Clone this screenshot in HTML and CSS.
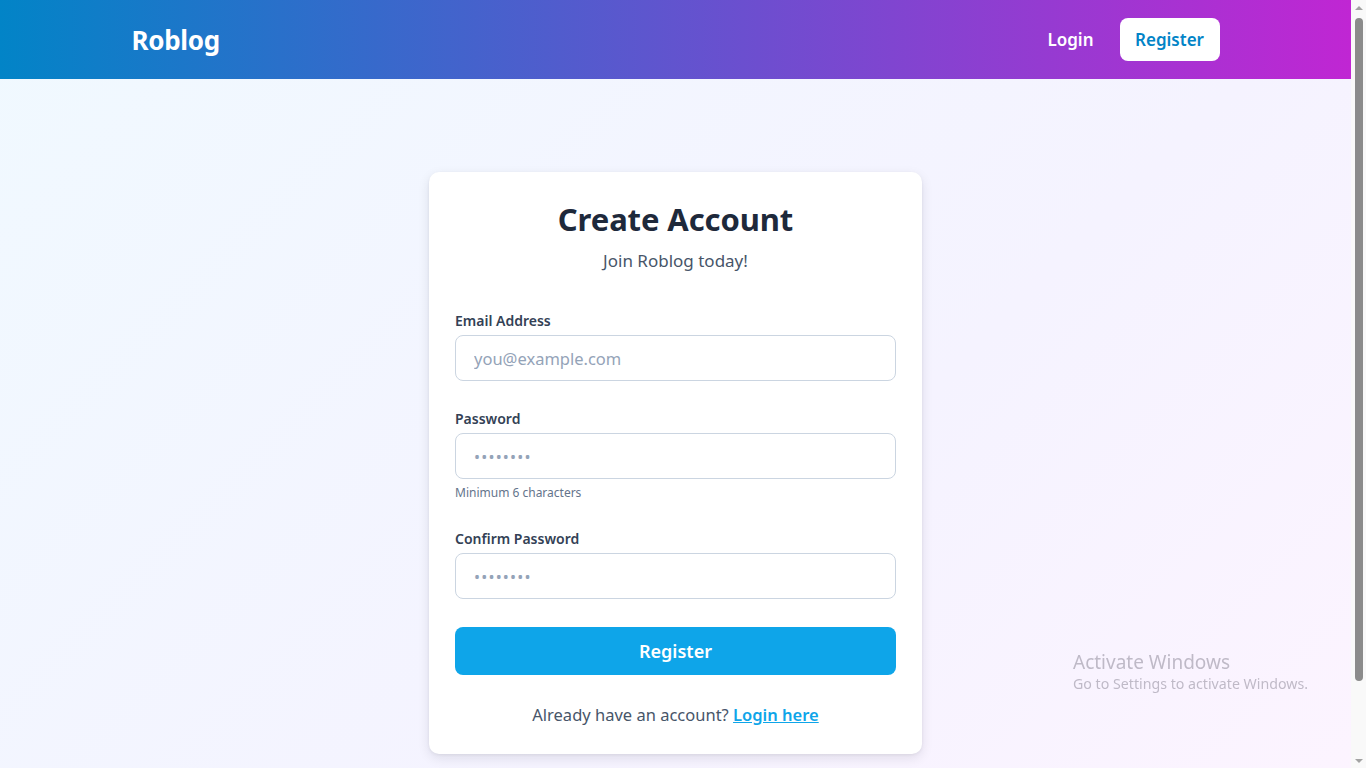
FILE: index.html
```html
<!DOCTYPE html>
<html lang="en">
<head>
<meta charset="utf-8">
<title>Register - Roblog</title>
<link rel="stylesheet" href="styles.css">
</head>
<body>
<div class="page">
  <header class="navbar">
    <div class="nav-inner">
      <a class="logo" href="#">Roblog</a>
      <nav class="nav-links">
        <a class="nav-login" href="#">Login</a>
        <a class="nav-register" href="#">Register</a>
      </nav>
    </div>
  </header>
  <main class="main">
    <section class="card">
      <h1 class="title">Create Account</h1>
      <p class="subtitle">Join Roblog today!</p>
      <form class="form">
        <div class="field">
          <label class="label" for="email">Email Address</label>
          <input class="input" id="email" type="email" placeholder="you@example.com">
        </div>
        <div class="field field-pass">
          <label class="label" for="password">Password</label>
          <input class="input input-pass" id="password" type="password" placeholder="••••••••">
          <p class="hint">Minimum 6 characters</p>
        </div>
        <div class="field">
          <label class="label" for="confirm">Confirm Password</label>
          <input class="input input-pass" id="confirm" type="password" placeholder="••••••••">
        </div>
        <button class="submit" type="button">Register</button>
      </form>
      <p class="switch">Already have an account? <a class="switch-link" href="#">Login here</a></p>
    </section>
  </main>
</div>
<div class="scrollbar" aria-hidden="true">
  <span class="sb-arrow sb-up"></span>
  <span class="sb-track"><span class="sb-thumb"></span></span>
  <span class="sb-arrow sb-down"></span>
</div>
<div class="watermark">
  <div class="wm-title">Activate Windows</div>
  <div class="wm-sub">Go to Settings to activate Windows.</div>
</div>
</body>
</html>
```
FILE: styles.css
```css
* { box-sizing: border-box; }
html, body { margin: 0; padding: 0; }
html { overflow: hidden; }
body {
  font-family: "Noto Sans", "Open Sans", sans-serif;
  color: #1e293b;
  background: #f9f9f9;
}
a { text-decoration: none; }

.page {
  margin-right: 15px;
  min-height: 852px;
  background: linear-gradient(135deg, #f0f9ff 0%, #f5f3ff 60%, #fdf4ff 100%);
}

.navbar {
  height: 79px;
  background: linear-gradient(90deg, #0284c7 0%, #6b4fcf 55%, #c026d3 100%);
}
.nav-inner {
  max-width: 1152px;
  margin: 0 auto;
  padding: 0 32px;
  height: 100%;
  display: flex;
  align-items: center;
  justify-content: space-between;
}
.logo {
  color: #fff;
  font-weight: 700;
  font-size: 26px;
  letter-spacing: -0.3px;
}
.nav-links {
  display: flex;
  align-items: center;
  gap: 26px;
}
.nav-login {
  color: #fff;
  font-weight: 600;
  font-size: 17px;
}
.nav-register {
  background: #fff;
  color: #0284c7;
  font-weight: 600;
  font-size: 17px;
  height: 43px;
  width: 100px;
  display: flex;
  align-items: center;
  justify-content: center;
  border-radius: 8px;
}

.main {
  display: flex;
  justify-content: center;
  padding: 93px 16px 99px;
}
.card {
  width: 493px;
  background: #fff;
  border-radius: 10px;
  box-shadow: 0 4px 12px rgba(15, 23, 42, 0.10), 0 1px 3px rgba(15, 23, 42, 0.06);
  padding: 27px 26px 27px;
}
.title {
  margin: 0;
  text-align: center;
  font-size: 31px;
  font-weight: 700;
  line-height: 40px;
  color: #1e293b;
  letter-spacing: -0.1px;
}
.subtitle {
  margin: 10px 0 0;
  text-align: center;
  font-size: 17px;
  line-height: 24px;
  color: #475569;
}
.form {
  margin-top: 38px;
  display: flex;
  flex-direction: column;
}
.field {
  display: flex;
  flex-direction: column;
  margin-bottom: 28px;
}
.label {
  font-size: 14px;
  font-weight: 600;
  color: #334155;
  line-height: 20px;
  margin-bottom: 4px;
}
.input {
  height: 46px;
  border: 1px solid #cbd5e1;
  border-radius: 8px;
  padding: 0 18px;
  font-family: inherit;
  font-size: 16.5px;
  color: #1e293b;
  background: #fff;
  outline: none;
}
.input::placeholder { color: #94a3b8; }
.input-pass::placeholder { font-size: 16px; letter-spacing: 1.2px; }
.hint {
  margin: 6px 0 0;
  font-size: 12px;
  line-height: 16px;
  color: #64748b;
}
.submit {
  height: 48px;
  border: none;
  border-radius: 8px;
  background: #0ea5e9;
  color: #fff;
  font-family: inherit;
  font-size: 18px;
  font-weight: 600;
}
.switch {
  margin: 28px 0 0;
  text-align: center;
  font-size: 16.5px;
  line-height: 24px;
  color: #475569;
}
.switch-link {
  color: #0ea5e9;
  font-weight: 600;
  text-decoration: underline;
}

/* decorative classic scrollbar, overlaid at the right edge */
.scrollbar {
  position: fixed;
  top: 0;
  right: 0;
  width: 15px;
  height: 100vh;
  background: #f9f9f9;
  display: flex;
  flex-direction: column;
  align-items: center;
}
.sb-arrow {
  height: 15px;
  width: 15px;
  display: flex;
  align-items: center;
  justify-content: center;
}
.sb-up::before,
.sb-down::before {
  content: "";
  width: 0;
  height: 0;
  border-left: 4px solid transparent;
  border-right: 4px solid transparent;
}
.sb-up::before { border-bottom: 4px solid #a3a3a3; }
.sb-down::before { border-top: 4px solid #a3a3a3; }
.sb-track {
  flex: 1;
  width: 15px;
  display: flex;
  justify-content: center;
  padding-top: 3px;
}
.sb-thumb {
  width: 8px;
  height: 663px;
  background: #8b8b8b;
  border-radius: 4px;
}

.watermark {
  position: fixed;
  left: 1073px;
  top: 650px;
  color: rgba(120, 115, 130, 0.45);
  font-family: "Noto Sans", sans-serif;
}
.wm-title { font-size: 19px; line-height: 24px; }
.wm-sub { font-size: 14.2px; line-height: 20px; }
```
